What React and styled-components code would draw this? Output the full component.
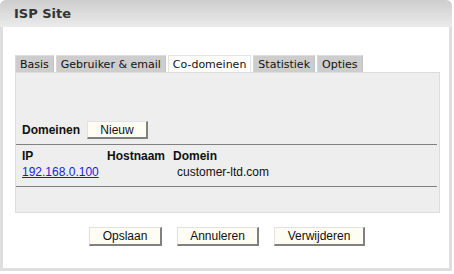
import styled, { createGlobalStyle } from 'styled-components'

const GlobalStyle = createGlobalStyle`
* {
  box-sizing: border-box;
  margin: 0;
  padding: 0;
}
body {
  background: #fff;
  font-family: 'Liberation Sans', Arial, sans-serif;
}
`

const Frame = styled.div`
  width: 452px;
  border: 3px solid #dedede;
  border-top: none;
  border-radius: 6px 6px 0 0;
  background: #fff;
`

const TitleBar = styled.div`
  height: 27px;
  margin: 0 -3px;
  padding-left: 14px;
  display: flex;
  align-items: center;
  border-radius: 6px 6px 0 0;
  background: linear-gradient(to bottom, #cdcdcd, #ebebeb);
  font-family: 'DejaVu Sans', Verdana, sans-serif;
  font-weight: bold;
  font-size: 13px;
  color: #333;
`

const Body = styled.div`
  padding: 28px 9px 22px 12px;
`

const Tabs = styled.div`
  display: flex;
  gap: 2px;
  height: 17px;
`

const Tab = styled.div`
  height: 17px;
  padding: 0 4px;
  display: flex;
  align-items: center;
  font-family: 'DejaVu Sans', Verdana, sans-serif;
  font-size: 11px;
  color: #111;
  background: ${props => props.active ? '#fff' : '#cdcdcd'};
  border-top: 1px solid ${props => props.active ? '#e4e4e4' : '#dddddd'};
  border-left: 1px solid ${props => props.active ? '#e4e4e4' : '#d6d6d6'};
  border-right: 1px solid ${props => props.active ? '#e4e4e4' : '#c4c4c4'};
`

const Panel = styled.div`
  width: 425px;
  background: #eeeeee;
  border: 1px solid #dcdcdc;
  padding: 48px 2px 25px 0;
`

const DomainBar = styled.div`
  display: flex;
  align-items: center;
  gap: 7px;
  height: 18px;
  padding-left: 6px;
  margin-bottom: 5px;
  font-size: 12px;
  font-weight: bold;
  color: #111;
`

const Button = styled.button`
  height: ${props => props.small ? '18px' : '19px'};
  width: ${props => props.w}px;
  background: #fdfdf3;
  border: 1px solid;
  border-color: #e2e2e2 #808080 #808080 #e2e2e2;
  border-right-width: 2px;
  border-bottom-width: 2px;
  font-family: 'Liberation Sans', Arial, sans-serif;
  font-size: 12px;
  font-weight: normal;
  color: #111;
`

const Table = styled.div`
  border-top: 1px solid #808080;
  border-bottom: 1px solid #808080;
  padding: 3px 0 6px 6px;
`

const Row = styled.div`
  display: grid;
  grid-template-columns: 85px 66px 1fr;
  line-height: 16px;
  font-size: 12px;
  font-weight: ${props => props.head ? 'bold' : 'normal'};
  color: #111;
`

const Cell = styled.div`
  padding-left: ${props => props.indent || 0}px;
`

const Link = styled.a`
  color: #1a1ae6;
  text-decoration: underline;
`

const Actions = styled.div`
  display: flex;
  justify-content: center;
  gap: 15px;
  margin-top: 14px;
  padding-right: 1px;
`

const tabs = ['Basis', 'Gebruiker & email', 'Co-domeinen', 'Statistiek', 'Opties']

const App = () => {
  return (
    <>
      <GlobalStyle />
      <Frame>
        <TitleBar>ISP Site</TitleBar>
        <Body>
          <Tabs>
            {tabs.map(t => (
              <Tab key={t} active={t === 'Co-domeinen'}>{t}</Tab>
            ))}
          </Tabs>
          <Panel>
            <DomainBar>
              Domeinen
              <Button small w={61}>Nieuw</Button>
            </DomainBar>
            <Table>
              <Row head>
                <Cell>IP</Cell>
                <Cell>Hostnaam</Cell>
                <Cell>Domein</Cell>
              </Row>
              <Row>
                <Cell><Link href="#">192.168.0.100</Link></Cell>
                <Cell></Cell>
                <Cell indent={4}>customer-ltd.com</Cell>
              </Row>
            </Table>
          </Panel>
          <Actions>
            <Button w={73}>Opslaan</Button>
            <Button w={82}>Annuleren</Button>
            <Button w={91}>Verwijderen</Button>
          </Actions>
        </Body>
      </Frame>
    </>
  )
}

export default App
